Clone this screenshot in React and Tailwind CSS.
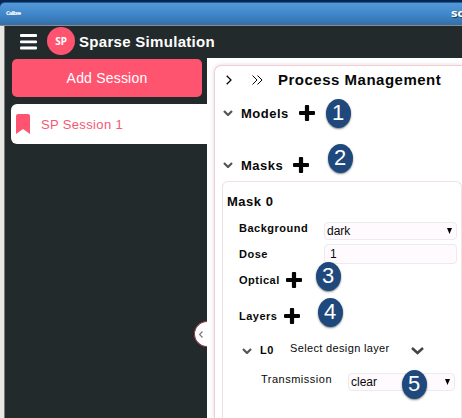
import React from 'react';

function Chevron({ className, d = 'M1 1l4 4 4-4', box = '0 0 10 6', weight = 2.2 }) {
  return (
    <svg viewBox={box} className={`shrink-0 ${className}`} fill="none" stroke="currentColor" strokeWidth={weight}>
      <path d={d} />
    </svg>
  );
}

function Plus({ className = '' }) {
  return (
    <svg viewBox="0 0 16 16" className={`size-4 shrink-0 ${className}`} fill="#050505">
      <rect x="5.9" y="0" width="4.200" height="16" rx="1" />
      <rect x="0" y="5.900" width="16" height="4.200" rx="1" />
    </svg>
  );
}

function Badge({ n, className }) {
  return (
    <div className={`absolute flex h-[29px] w-[25px] items-center justify-center rounded-[50%] bg-[#1f497d] text-[22px] leading-none tracking-normal text-white shadow-[0_1px_2px_rgba(0,0,0,0.5)] ${className}`}>
      <span className="-ml-px -mt-px">{n}</span>
    </div>
  );
}

function Select({ value, className }) {
  return (
    <div className={`flex h-[18px] items-center justify-between rounded-[4px] border border-[#eee8ef] bg-[#fefafe] pl-[2px] pr-1 text-[12px] leading-none tracking-normal ${className}`}>
      <span>{value}</span>
      <svg viewBox="0 0 5 6" className="h-[6px] w-[5px]"><path d="M0 0h5L2.5 6z" fill="#000" /></svg>
    </div>
  );
}

export default function App() {
  return (
    <div className="relative flex h-[418px] w-[462px] flex-col overflow-hidden bg-white font-['Liberation_Sans',Arial,sans-serif] tracking-[0.5px] text-[#080808]">
      <div className="h-[26px] shrink-0 bg-[#062653] pt-[2px]">
        <div className="flex h-6 items-center justify-between overflow-hidden rounded-tl-[5px] border-y border-t-[#245b91] border-b-[#8a8c8e] bg-linear-to-b from-[#5399d8] via-[#4087ca] to-[#336fa9] pl-[6px] text-white">
          <span className="-mt-[1px] font-['DejaVu_Sans',sans-serif] text-[5px] font-bold leading-none tracking-[-0.8px]">Calibre</span>
          <span className="w-[11px] overflow-hidden whitespace-nowrap font-['DejaVu_Sans',sans-serif] text-[11px] font-bold leading-[14px] tracking-normal [text-shadow:1px_1px_1px_#173957]">so</span>
        </div>
      </div>
      <div className="flex min-h-0 flex-1 border-l-4 border-[#e7e7e4]">
        <div className="flex min-w-0 flex-1 flex-col border-l border-[#777a79]">
          <header className="flex h-8 shrink-0 items-center bg-[#222a2b] pl-[15px] text-white">
            <svg viewBox="0 0 17 16" className="-mt-px h-4 w-[17px]" fill="#fff">
              <rect width="17" height="3" rx="1" />
              <rect y="6.500" width="17" height="2.700" rx="1" />
              <rect y="12.600" width="17" height="3" rx="1" />
            </svg>
            <div className="-mt-[2px] ml-[10px] flex size-7 items-center justify-center rounded-full bg-[#ff5470] font-['Noto_Sans',sans-serif] text-[10px] font-bold tracking-normal">SP</div>
            <h1 className="-mt-[2px] ml-1 whitespace-nowrap text-[15px] font-bold leading-none tracking-[0.3px]">Sparse Simulation</h1>
          </header>
          <div className="flex min-h-0 flex-1">
            <aside className="relative w-[202px] shrink-0 bg-[#222a2b]">
              <button className="ml-[7px] mt-px flex h-[38px] w-[190px] items-center justify-center rounded-[5px] bg-[#ff5470] text-[14px] tracking-[0.2px] text-white">Add Session</button>
              <div className="ml-[6px] mt-[7px] flex h-10 items-center rounded-l-[6px] bg-white pl-[5px] text-[13px] tracking-[0.35px] text-[#f45873]">
                <svg viewBox="0 0 14 20" className="-mt-px h-5 w-[14px]"><path d="M2 0h10q2 0 2 2v18l-7-5-7 5V2q0-2 2-2" fill="#ff5470" /></svg>
                <span className="ml-[11px] mt-px">SP Session 1</span>
              </div>
              <div className="absolute right-0 top-[263px] flex h-[26px] w-[13px] items-center rounded-l-full border border-r-0 border-[#8e3e4b] bg-white pl-1 text-[#777]">
                <Chevron className="h-[7px] w-[4px]" box="0 0 4 7" d="M3.5.5l-3 3 3 3" weight={1.2} />
              </div>
            </aside>
            <main className="min-w-0 flex-1 bg-white pl-[7px] pt-[7px]">
              <div className="flex h-full flex-col rounded-tl-[7px] border-l border-t border-[#f5ccd1] bg-white shadow-[0_0_5px_#dcdcdc]">
                <div className="flex h-7 shrink-0 items-center pl-[11px]">
                  <Chevron className="h-[10px] w-[6px]" box="0 0 6 10" d="M.7.7L5 5 .7 9.3" weight={1.3} />
                  <Chevron className="ml-5 h-[10px] w-[11px]" box="0 0 11 10" d="M.5.5L5 5 .5 9.5M5.5.5L10 5l-4.500 4.500" weight={1} />
                  <h2 className="-mt-[2px] ml-[15px] whitespace-nowrap text-[15px] font-bold leading-none">Process Management</h2>
                </div>
                <div className="flex h-[38px] shrink-0 items-center pl-2 text-[13px] font-bold leading-none">
                  <Chevron className="h-[6px] w-[10px] text-[#555]" />
                  <span className="ml-2">Models</span><Plus className="ml-[10px]" />
                </div>
                <div className="mt-[14px] flex h-[38px] shrink-0 items-center pl-2 text-[13px] font-bold leading-none">
                  <Chevron className="h-[6px] w-[10px] text-[#555]" />
                  <span className="ml-2">Masks</span><Plus className="ml-[10px]" />
                </div>
                <section className="-mt-[3px] ml-[7px] min-h-0 flex-1 rounded-t-[6px] border border-b-0 border-[#f0dfe3] text-[11px] leading-none">
                  <h3 className="mt-3 pl-1 text-[13px] font-bold leading-[15px]">Mask 0</h3>
                  <div className="mt-[13px] flex h-[18px] pl-4">
                    <span className="mt-px w-[85px] font-bold">Background</span><Select value="dark" className="w-[133px]" />
                  </div>
                  <div className="mt-1 flex h-5 items-center pl-4">
                    <span className="w-[85px] font-bold">Dose</span>
                    <div className="flex h-5 w-[133px] items-center rounded-[4px] border border-[#eee8ef] bg-[#fefafe] pl-[5px] text-[12px]">1</div>
                  </div>
                  <div className="mt-2 flex h-4 items-center pl-4 font-bold"><span>Optical</span><Plus className="ml-[6px]" /></div>
                  <div className="mt-5 flex h-4 items-center pl-4 font-bold"><span>Layers</span><Plus className="ml-[7px]" /></div>
                  <div className="mt-[18px] flex h-[17px] items-center pl-[19px]">
                    <Chevron className="h-[6px] w-[10px] text-[#555]" />
                    <span className="ml-2 w-[30px] font-bold">L0</span>
                    <span className="-mt-1 w-[121px] whitespace-nowrap tracking-[0.35px]">Select design layer</span>
                    <Chevron className="h-[8px] w-[13px] text-[#444]" box="0 0 13 8" d="M1 1l5.500 5L12 1" weight={2.5} />
                  </div>
                  <div className="mt-[14px] flex h-[18px] pl-[38px]">
                    <span className="mt-px w-[87px]">Transmission</span><Select value="clear" className="w-[107px]" />
                  </div>
                </section>
              </div>
            </main>
          </div>
        </div>
      </div>
      <Badge n="1" className="left-[326px] top-[99px]" />
      <Badge n="2" className="left-[328px] top-[144px]" />
      <Badge n="3" className="left-[316px] top-[262px]" />
      <Badge n="4" className="left-[318px] top-[298px]" />
      <Badge n="5" className="left-[402px] top-[370px]" />
    </div>
  );
}
